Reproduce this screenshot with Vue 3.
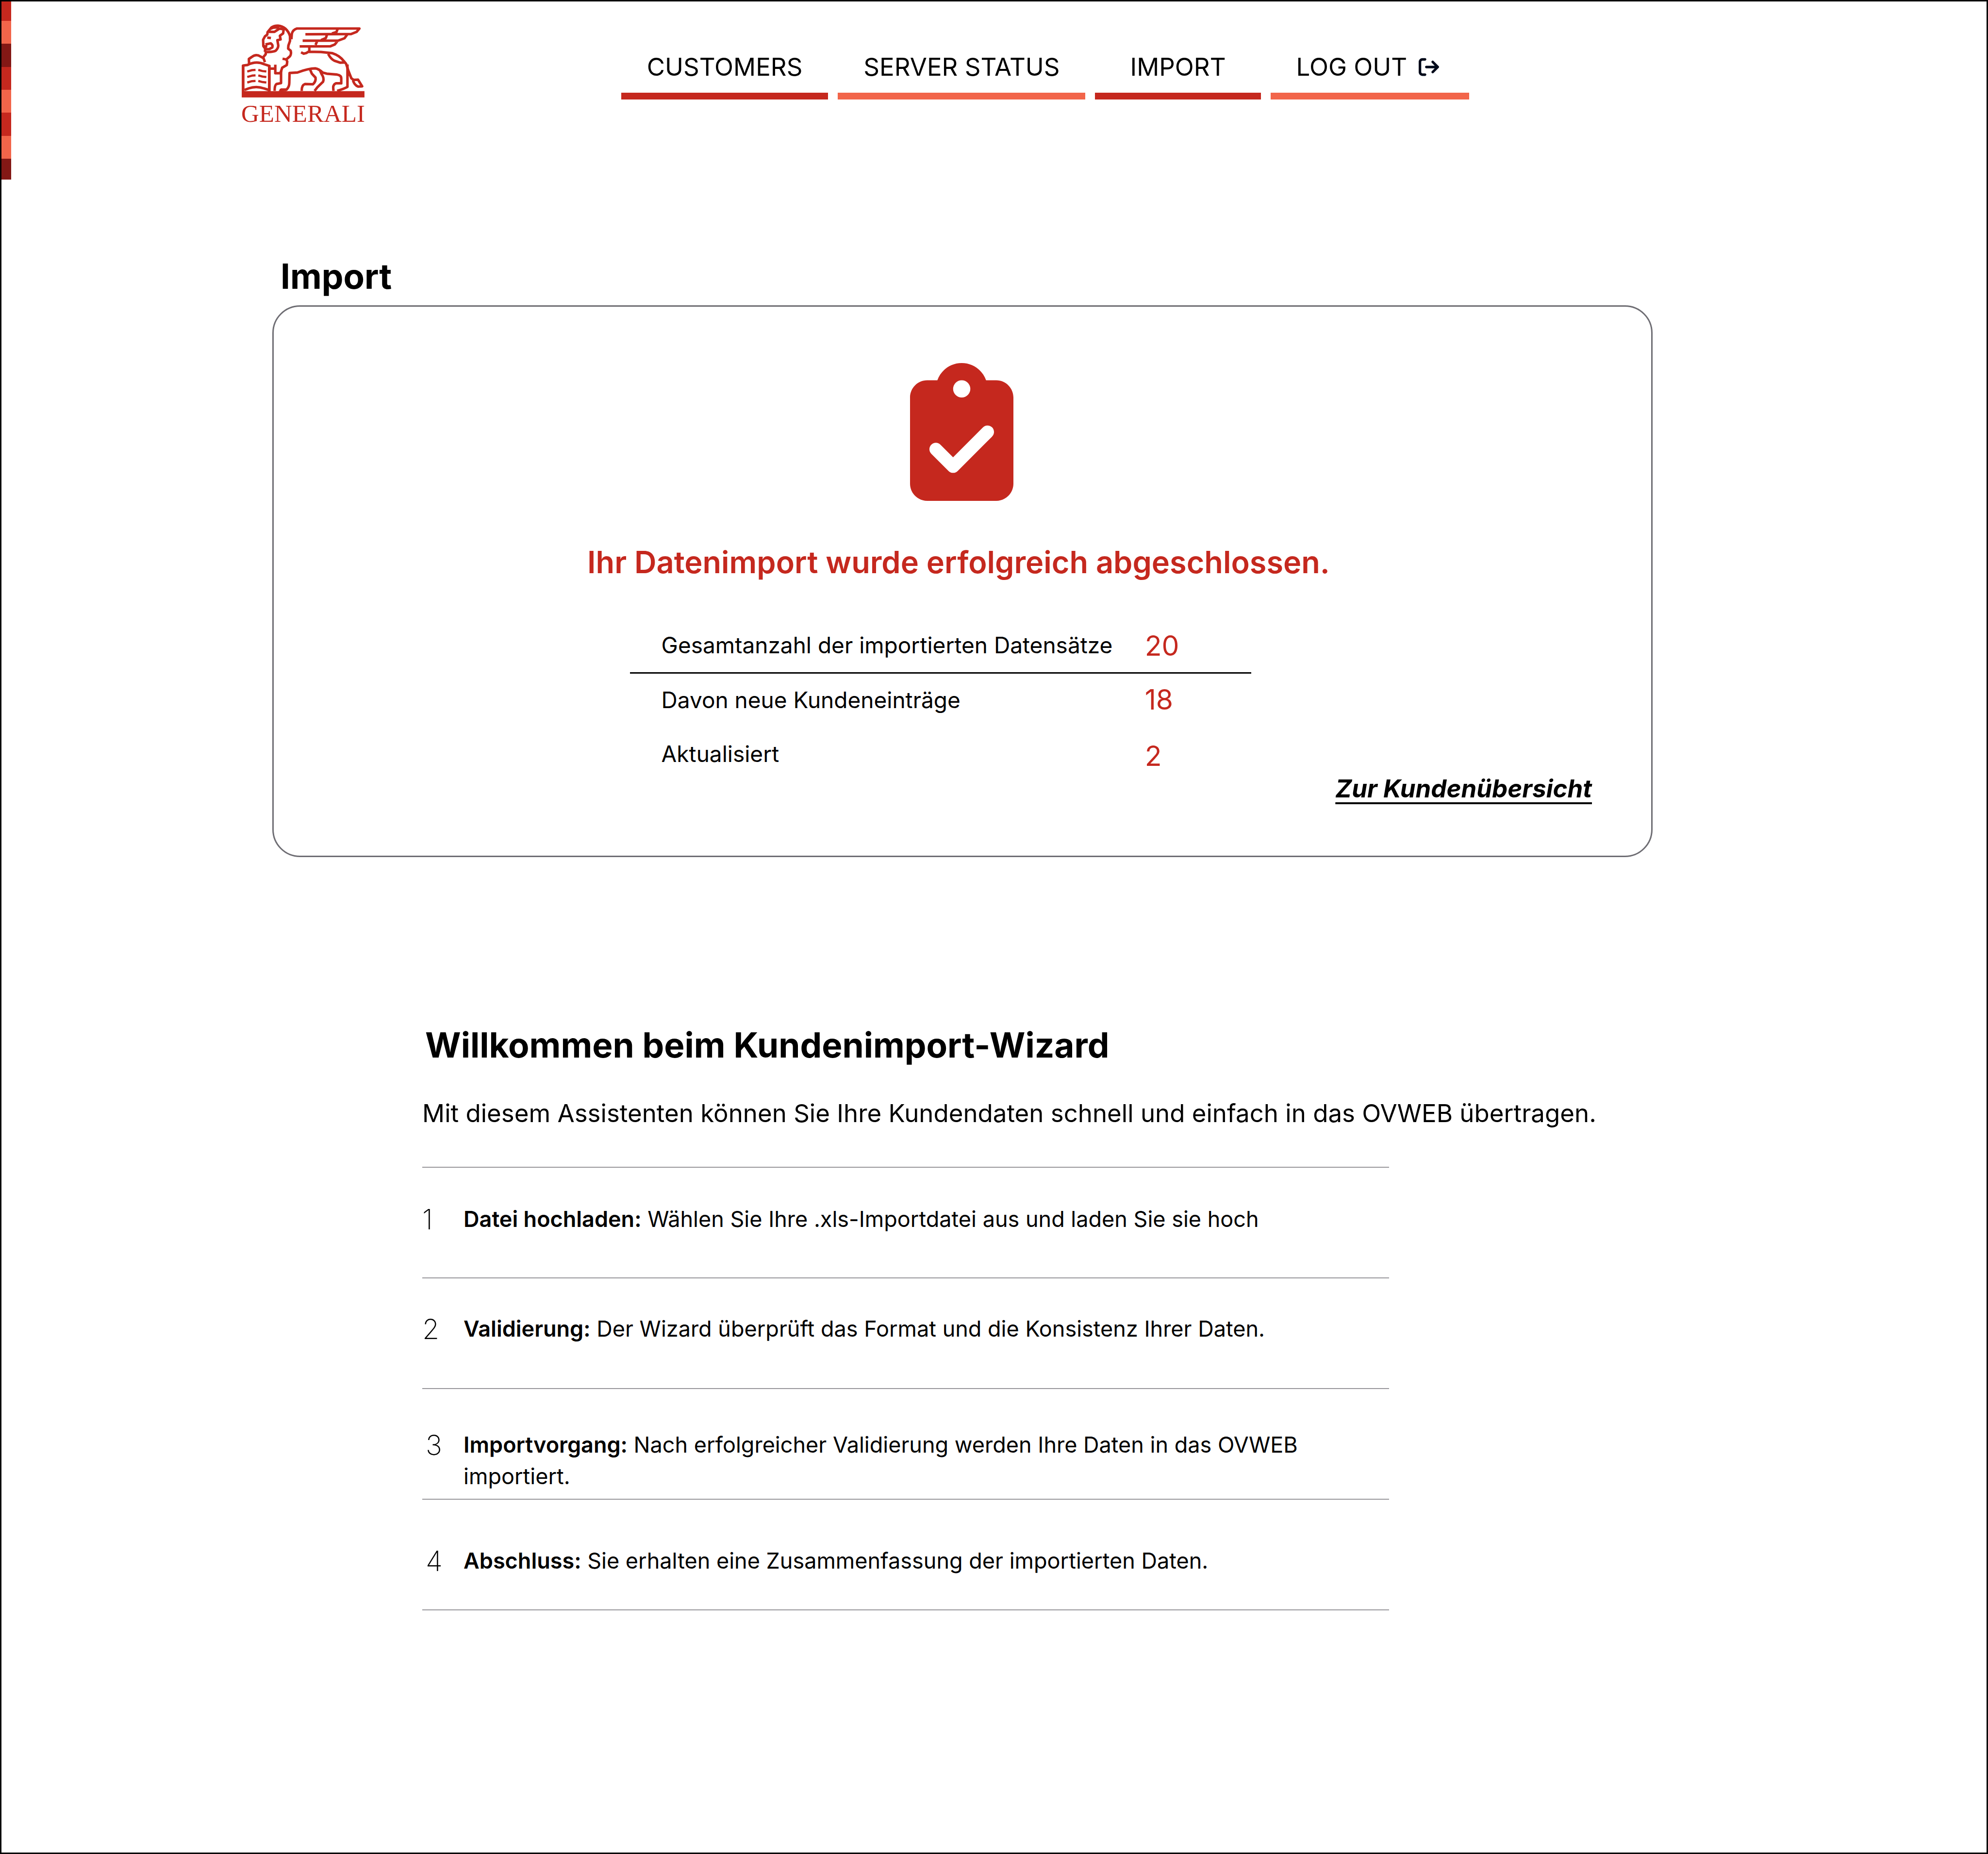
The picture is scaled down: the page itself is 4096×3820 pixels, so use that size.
<script setup>
const stripes = ['red', 'coral', 'dark', 'red', 'coral', 'red', 'coral', 'dark']

const links = [
  { label: 'CUSTOMERS', tone: 'red' },
  { label: 'SERVER STATUS', tone: 'coral' },
  { label: 'IMPORT', tone: 'red', roomy: true },
  { label: 'LOG OUT', tone: 'coral', icon: true },
]

const results = [
  { label: 'Gesamtanzahl der importierten Datensätze', value: 20 },
  { label: 'Davon neue Kundeneinträge', value: 18 },
  { label: 'Aktualisiert', value: 2 },
]

const steps = [
  { title: 'Datei hochladen:', text: 'Wählen Sie Ihre .xls-Importdatei aus und laden Sie sie hoch' },
  { title: 'Validierung:', text: 'Der Wizard überprüft das Format und die Konsistenz Ihrer Daten.' },
  { title: 'Importvorgang:', text: 'Nach erfolgreicher Validierung werden Ihre Daten in das OVWEB importiert.' },
  { title: 'Abschluss:', text: 'Sie erhalten eine Zusammenfassung der importierten Daten.' },
]
</script>

<template>
  <div class="page">
    <div class="stripes" aria-hidden="true">
      <span v-for="(tone, i) in stripes" :key="i" :class="tone"></span>
    </div>

    <header class="header">
      <a class="logo" href="#">
        <svg class="lion" viewBox="60 60 1068 642" aria-hidden="true">
          <g fill="none" stroke="currentColor" stroke-width="22" stroke-linejoin="round">
            <path d="M262 300 L264 272 L248 250 L246 195 L262 165 L282 150 L285 128 L318 88 Q340 72 375 72 Q415 76 440 98 Q472 128 480 165 L480 205 L466 245 L464 272 L486 290 Q494 320 478 340 L448 366 L415 360 M448 366 L456 385 L452 415 L412 438 L402 470 L402 572 L362 580 Q346 590 346 640" />
            <path d="M296 126 L345 126 L388 98 L425 104 L420 140 L392 160 L398 192 L370 198 L378 245 Q378 268 356 290 Q340 302 262 302" />
            <path d="M312 100 Q335 82 385 92" />
            <path d="M282 176 L314 180 M250 250 L282 256 M266 236 L312 226 Q334 240 326 262 L300 276 L256 278" />
            <path d="M270 302 L268 322 L246 348 M124 402 L122 362 L148 344 Q186 316 222 340 L250 356 L262 390" />
            <path d="M66 420 L110 414 Q186 376 256 408 L306 424 M84 632 L120 618 Q186 594 252 618 L304 634" />
            <path d="M108 471 L150 459 L180 457 M204 457 L240 467 L274 471 M108 519 L150 507 L180 505 M204 505 L240 515 L274 519 M108 567 L150 555 L180 553 M204 553 L240 563 L274 567" stroke-width="19" />
            <path d="M306 446 L352 446 M352 412 L352 486 L394 486 L406 464" />
            <path d="M390 634 L450 628 Q474 606 474 570 L476 484 L545 480 Q640 444 700 444 Q730 448 764 480 L800 490 L890 498 Q926 504 926 530 L926 574 L880 574 Q856 584 856 610 L858 640" />
            <path d="M654 452 L670 490 L702 524 Q708 556 680 582 L610 580 Q580 590 582 640" />
            <path d="M742 464 L754 492 Q780 530 768 560 L720 606 L694 640" />
            <path d="M980 410 L980 605 Q950 622 890 640" />
            <path d="M492 190 L496 142 Q504 108 540 97 L1084 97 L1060 126 L1012 145 L614 147 M494 150 L480 165" />
            <path d="M894 102 L884 128 L845 140 M978 150 L954 182 L900 202 L590 203 M802 150 L792 180 L750 198 M892 208 L870 236 L830 252 L564 253 M716 208 L702 240" />
            <path d="M648 256 L648 294 L622 310 L600 316 L576 304 M638 299 L750 301 L850 312 Q912 332 948 380 L968 404 L990 470 L1014 530 L1034 544 L1072 542 L1108 600 L1072 602 Q1040 590 1028 548" />
            <path d="M812 318 Q836 364 868 378 L915 394 L962 392" />
          </g>
          <g fill="currentColor">
            <path d="M60 414 H84 V650 H60 Z M288 416 H312 V650 H288 Z M60 642 H1128 V697 H60 Z" />
            <path d="M400 618 H456 L450 642 H380 Z M975 430 L1000 470 L1018 528 L990 510 Z" />
          </g>
        </svg>
        <span class="wordmark">GENERALI</span>
      </a>

      <nav class="nav">
        <a
          v-for="link in links"
          :key="link.label"
          href="#"
          class="nav-link"
          :class="[`line-${link.tone}`, { roomy: link.roomy, 'with-icon': link.icon }]"
        >
          {{ link.label }}
          <svg v-if="link.icon" class="exit" viewBox="0 0 512 512" aria-hidden="true">
            <path
              fill="currentColor"
              d="M502.6 278.6c12.5-12.5 12.5-32.8 0-45.3l-128-128c-12.5-12.5-32.8-12.5-45.3 0s-12.5 32.8 0 45.3L402.7 224 192 224c-17.7 0-32 14.3-32 32s14.3 32 32 32l210.7 0-73.4 73.4c-12.5 12.5-12.5 32.8 0 45.3s32.8 12.5 45.3 0l128-128zM160 96c17.7 0 32-14.3 32-32s-14.3-32-32-32L96 32C43 32 0 75 0 128L0 384c0 53 43 96 96 96l64 0c17.7 0 32-14.3 32-32s-14.3-32-32-32l-64 0c-17.7 0-32-14.3-32-32l0-256c0-17.7 14.3-32 32-32l64 0z"
            />
          </svg>
        </a>
      </nav>
    </header>

    <main>
      <section class="import">
        <h1 class="title">Import</h1>
        <div class="card">
          <svg class="clipboard" viewBox="0 0 384 512" aria-hidden="true">
            <path
              fill="currentColor"
              d="M192 0c-41.8 0-77.4 26.7-90.5 64H64C28.7 64 0 92.7 0 128V448c0 35.3 28.7 64 64 64H320c35.3 0 64-28.7 64-64V128c0-35.3-28.7-64-64-64H282.5C269.4 26.7 233.8 0 192 0zm0 64a32 32 0 1 1 0 64 32 32 0 1 1 0-64zM305 273L177 401c-9.4 9.4-24.6 9.4-33.9 0L79 337c-9.4-9.4-9.4-24.6 0-33.9s24.6-9.4 33.9 0l47 47L271 239c9.4-9.4 24.6-9.4 33.9 0s9.4 24.6 0 33.9z"
            />
          </svg>
          <p class="message">Ihr Datenimport wurde erfolgreich abgeschlossen.</p>
          <table class="results">
            <tbody>
              <tr v-for="row in results" :key="row.label">
                <th scope="row">{{ row.label }}</th>
                <td>{{ row.value }}</td>
              </tr>
            </tbody>
          </table>
          <a class="overview" href="#">Zur Kundenübersicht</a>
        </div>
      </section>

      <section class="wizard">
        <h2 class="title">Willkommen beim Kundenimport-Wizard</h2>
        <p class="intro">Mit diesem Assistenten können Sie Ihre Kundendaten schnell und einfach in das OVWEB übertragen.</p>
        <ol class="steps">
          <li v-for="(step, i) in steps" :key="step.title">
            <span class="number">{{ i + 1 }}</span>
            <p><strong>{{ step.title }}</strong> {{ step.text }}</p>
          </li>
        </ol>
      </section>
    </main>
  </div>
</template>

<style>
body {
  margin: 0;
  background: #fff;
}
</style>

<style scoped>
.page {
  --red: #c5281e;
  --coral: #f2654a;
  --dark: #831815;
  --gray: #6e6d73;
  --rule: #98979b;
  position: relative;
  box-sizing: border-box;
  min-height: 100vh;
  border: 3px solid #000;
  background: #fff;
  color: #000;
  font-family: Inter, "Liberation Sans", sans-serif;
}

h1,
h2,
p,
ol {
  margin: 0;
  padding: 0;
}

a {
  color: inherit;
}

.red {
  background: var(--red);
}

.coral {
  background: var(--coral);
}

.dark {
  background: var(--dark);
}

.stripes {
  position: absolute;
  top: 0;
  left: 0;
  display: grid;
  grid-template-rows: 40px repeat(6, 1fr) 43px;
  width: 20px;
  height: 367px;
}

.header {
  display: grid;
  grid-template-columns: 495fr 253px 529fr auto 1066fr;
  align-items: start;
  padding-top: 47px;
}

.logo {
  grid-column: 2;
  display: flex;
  flex-direction: column;
  align-items: center;
  color: var(--red);
  text-decoration: none;
}

.lion {
  width: 253px;
  height: 152px;
}

.wordmark {
  padding-top: 8px;
  font: 51px/48px "Liberation Serif", serif;
}

.nav {
  grid-column: 4;
  display: flex;
  gap: 20px;
  padding-top: 57px;
}

.nav-link {
  display: flex;
  align-items: center;
  gap: 24px;
  padding: 0 53px 22px;
  border-bottom: 14px solid;
  font-size: 51px;
  line-height: 62px;
  text-decoration: none;
  white-space: nowrap;
}

.nav-link.roomy {
  padding-inline: 72px;
}

.nav-link.with-icon {
  padding-right: 62px;
}

.line-red {
  border-color: var(--red);
}

.line-coral {
  border-color: var(--coral);
}

.exit {
  width: 42px;
  height: 42px;
  color: #000a1a;
}

.title {
  font-size: 71px;
  line-height: 86px;
  font-weight: 700;
}

.import {
  display: grid;
  grid-template-columns: 558fr 2844fr 688fr;
  row-gap: 17px;
  padding-top: 268px;
}

.import > * {
  grid-column: 2;
}

.import .title {
  padding-left: 17px;
}

.card {
  display: flex;
  flex-direction: column;
  padding: 116px 0 107px;
  border: 3px solid var(--gray);
  border-radius: 57px;
}

.clipboard {
  align-self: center;
  width: 213px;
  height: 284px;
  padding-right: 4px;
  color: var(--red);
}

.message {
  padding: 88px 16px 0 0;
  color: var(--red);
  font-size: 63px;
  line-height: 76px;
  font-weight: 600;
  text-align: center;
}

.results {
  width: 45.1%;
  margin: 100px 0 0 25.85%;
  border-collapse: separate;
  border-spacing: 0;
  table-layout: fixed;
}

.results th,
.results td {
  box-sizing: border-box;
  padding: 24px 0 0;
  font-weight: 400;
  text-align: left;
  vertical-align: top;
}

.results th {
  width: 82.9%;
  padding: 27px 0 0 65px;
  font-size: 46px;
  line-height: 55px;
}

.results td {
  color: var(--red);
  font-size: 57px;
  line-height: 69px;
}

.results tr:first-child > * {
  padding-top: 0;
  padding-bottom: 20px;
  border-bottom: 3px solid #000;
}

.results tr:first-child th {
  padding-top: 6px;
}

.results tr:nth-child(2) td {
  padding: 19px 0 23px;
}

.overview {
  align-self: flex-end;
  margin: 2px 122px 0 0;
  font-size: 51px;
  line-height: 62px;
  font-style: italic;
  font-weight: 700;
  text-decoration-thickness: 4px;
  text-underline-offset: 10px;
}

.wizard {
  padding: 344px 0 0 21.2%;
}

.wizard .title {
  padding-left: 6px;
}

.intro {
  padding-top: 67px;
  font-size: 51px;
  line-height: 62px;
  white-space: nowrap;
}

.steps {
  width: 61.8%;
  margin-top: 79px;
  border-top: 2px solid var(--rule);
  list-style: none;
}

.steps li {
  display: flex;
  align-items: flex-start;
  box-sizing: border-box;
  min-height: 228px;
  padding-top: 73px;
  border-bottom: 2px solid var(--rule);
  font-size: 45px;
  line-height: 65px;
}

.steps li:nth-child(2) {
  padding-top: 71px;
}

.steps li:nth-child(3) {
  padding-top: 82px;
}

.steps li:nth-child(4) {
  padding-top: 93px;
}

.number {
  box-sizing: border-box;
  flex: 0 0 85px;
  font-size: 57px;
  line-height: 67px;
  font-weight: 200;
}

.steps li:nth-child(n + 3) .number {
  padding-left: 7px;
}

.steps strong {
  font-weight: 600;
}
</style>
